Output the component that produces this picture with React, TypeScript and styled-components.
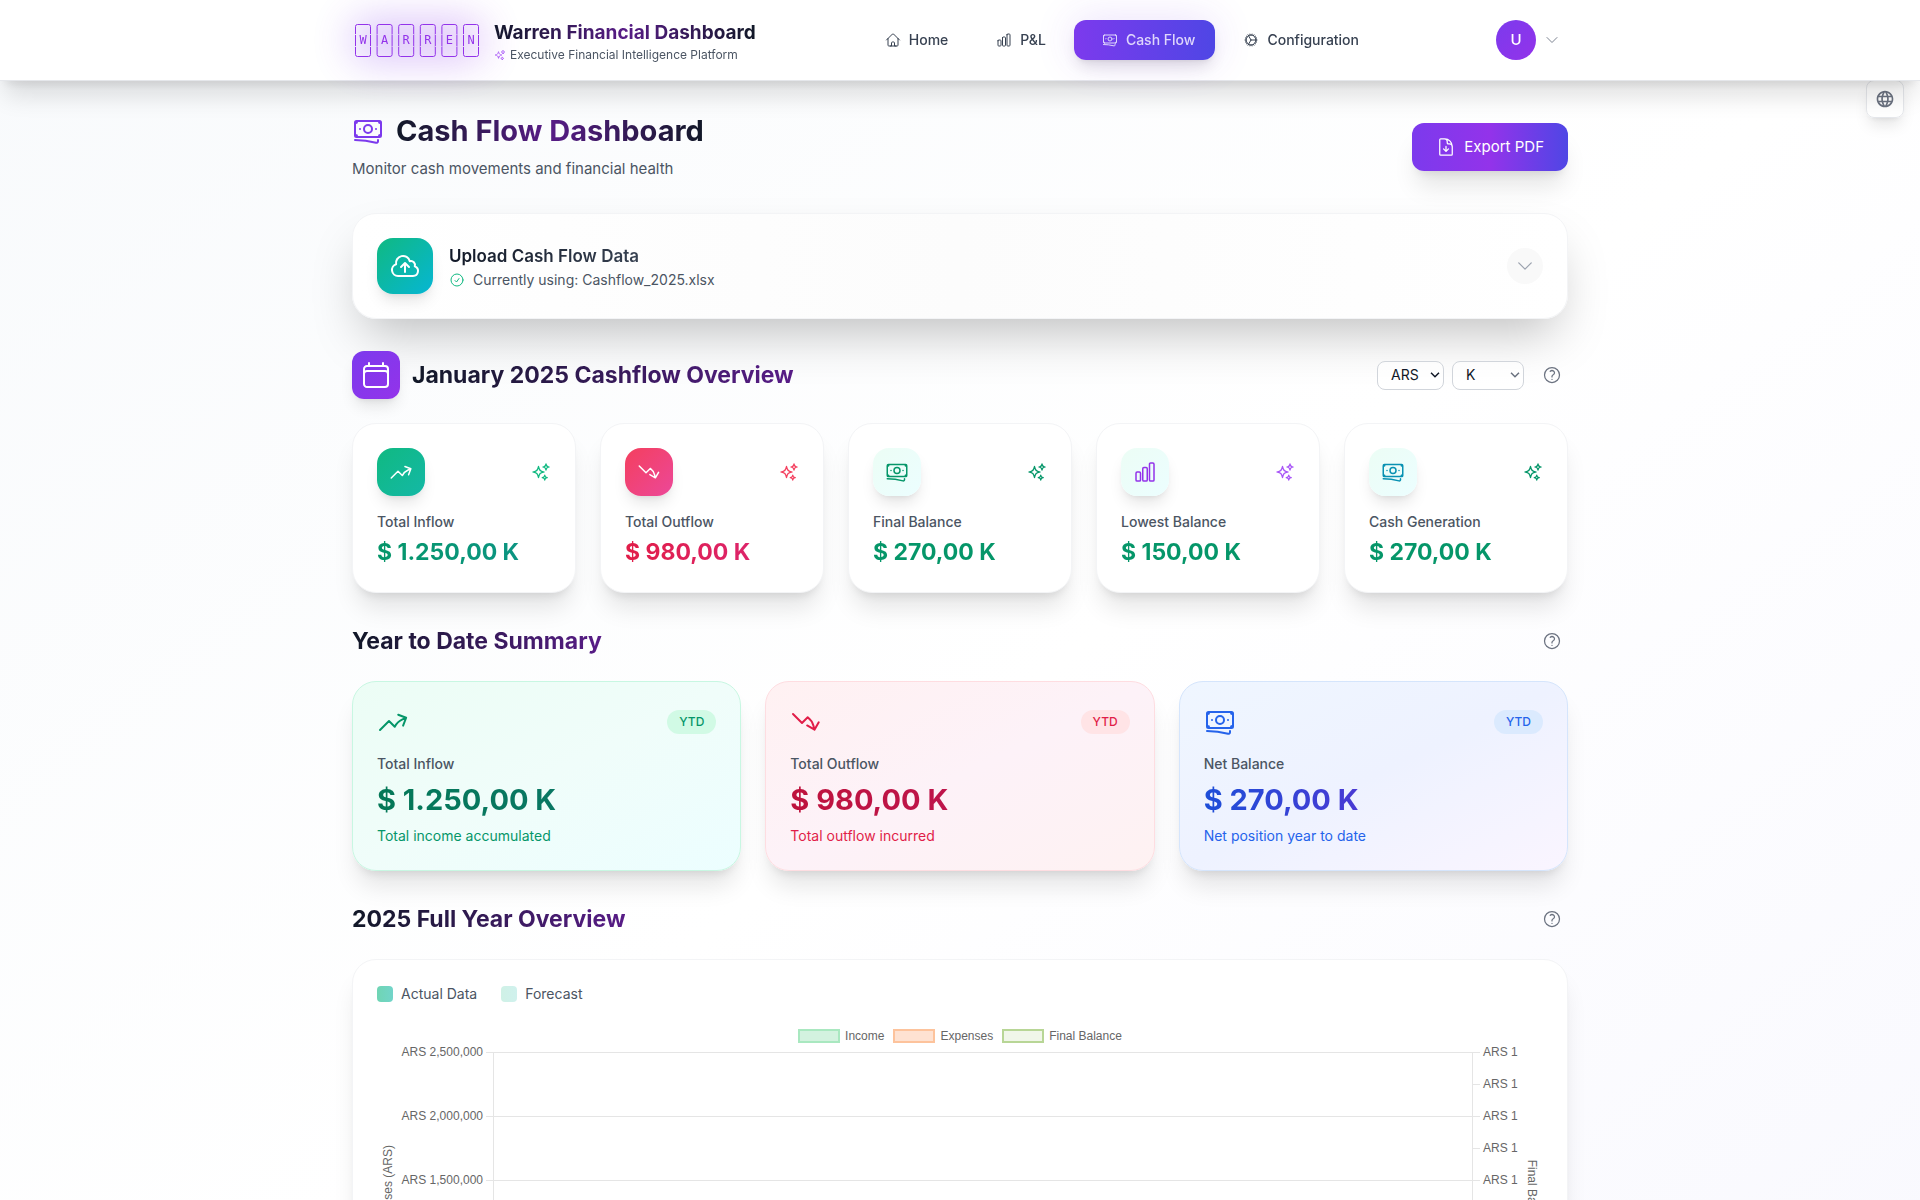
import React from "react";
import styled, { createGlobalStyle } from "styled-components";
import {
  HiOutlineArrowTrendingDown,
  HiOutlineArrowTrendingUp,
  HiOutlineBanknotes,
  HiOutlineCalendar,
  HiOutlineChartBar,
  HiOutlineCheckCircle,
  HiOutlineChevronDown,
  HiOutlineCloudArrowUp,
  HiOutlineCog,
  HiOutlineDocumentArrowDown,
  HiOutlineHome,
  HiOutlineQuestionMarkCircle,
  HiOutlineSparkles,
} from "react-icons/hi2";
import { MdLanguage } from "react-icons/md";

const GlobalStyle = createGlobalStyle`
  *, *::before, *::after { box-sizing: border-box; }
  body {
    margin: 0;
    font-family: Inter, "Liberation Sans", sans-serif;
    font-size: 15px;
    line-height: 24px;
    color: #111827;
  }
  h1, h2, h3, p { margin: 0; }
  button, select { font-family: inherit; }
  svg { display: block; flex-shrink: 0; }
`;

const Page = styled.div`
  min-height: 100vh;
  background: linear-gradient(to bottom right, #f8fafc, #ffffff 50%, #f8f8fe);
`;

const Container = styled.div`
  max-width: 1280px;
  margin: 0 auto;
  padding: 0 32px;
`;

const TopBar = styled.header`
  position: sticky;
  top: 0;
  z-index: 20;
  background: #ffffff;
  border-bottom: 1px solid #e5e7eb;
  box-shadow: 0 20px 25px -5px rgba(0, 0, 0, 0.12), 0 8px 10px -6px rgba(0, 0, 0, 0.1);
`;

const TopBarRow = styled(Container)`
  display: flex;
  align-items: center;
  justify-content: space-between;
  min-height: 80px;
`;

const Brand = styled.a`
  display: flex;
  align-items: center;
  gap: 12px;
  color: inherit;
  text-decoration: none;
`;

const LogoFrame = styled.span`
  position: relative;
  display: block;

  &::before {
    content: "";
    position: absolute;
    inset: 0;
    border-radius: 12px;
    background: linear-gradient(to right, #7c3aed, #9333ea);
    filter: blur(20px);
    opacity: 0.3;
  }

  svg { position: relative; }
`;

const BrandText = styled.span`
  display: flex;
  flex-direction: column;
  padding-top: 2px;
`;

const gradientText = `
  background-clip: text;
  -webkit-background-clip: text;
  color: transparent;
`;

const BrandName = styled.span`
  font-size: 19px;
  line-height: 28px;
  font-weight: 700;
  background-image: linear-gradient(to right, #111827, #581c87, #111827);
  ${gradientText}
`;

const BrandTag = styled.span`
  display: flex;
  align-items: center;
  gap: 4px;
  font-size: 12px;
  line-height: 16px;
  color: #4b5563;

  svg { color: #a855f7; }
`;

const Nav = styled.nav`
  display: flex;
  align-items: center;
  gap: 8px;
`;

const NavLink = styled.a<{ $active?: boolean }>`
  display: flex;
  align-items: center;
  gap: 8px;
  padding: 10px 20px 10px ${(p) => (p.$active ? 28 : 20)}px;
  border-radius: 12px;
  font-size: 14px;
  line-height: 20px;
  font-weight: 500;
  text-decoration: none;
  color: ${(p) => (p.$active ? "#ded6fb" : "#374151")};
  background: ${(p) => (p.$active ? "linear-gradient(to right, #7c3aed, #4f46e5)" : "none")};
  box-shadow: ${(p) =>
    p.$active
      ? "0 10px 15px -3px rgba(0,0,0,.1), 0 4px 6px -4px rgba(0,0,0,.1), 0 0 40px rgba(124,58,237,.16)"
      : "none"};
`;

const UserButton = styled.button`
  display: flex;
  align-items: center;
  gap: 8px;
  padding: 8px;
  border: 0;
  background: none;
  color: #7b8290;
`;

const Avatar = styled.span`
  display: grid;
  place-items: center;
  width: 40px;
  height: 40px;
  border-radius: 50%;
  background: linear-gradient(to bottom right, #7c3aed, #9333ea);
  color: #ffffff;
  font-size: 15px;
  line-height: 24px;
  font-weight: 500;
`;

const LanguageButton = styled.button`
  position: fixed;
  top: 80px;
  right: 16px;
  z-index: 10;
  display: grid;
  place-items: center;
  width: 38px;
  height: 38px;
  padding: 0;
  border: 1px solid #e5e7eb;
  border-radius: 8px;
  background: rgba(255, 255, 255, 0.9);
  color: #6b7280;
  box-shadow: 0 10px 15px -3px rgba(0, 0, 0, 0.1), 0 4px 6px -4px rgba(0, 0, 0, 0.1);
`;

const Main = styled.main`
  display: flex;
  flex-direction: column;
  gap: 32px;
  padding-top: 32px;
  padding-bottom: 32px;
`;

const PageHead = styled.div`
  display: flex;
  align-items: center;
  justify-content: space-between;
`;

const TitleRow = styled.div`
  display: flex;
  align-items: center;
  gap: 12px;

  svg { color: #7c3aed; }
`;

const PageTitle = styled.h1`
  font-size: 29px;
  line-height: 36px;
  font-weight: 700;
  background-image: linear-gradient(to right, #111827, #581c87, #111827);
  ${gradientText}
`;

const PageSubtitle = styled.p`
  margin-top: 8px;
  color: #4b5563;
`;

const ExportButton = styled.button`
  display: flex;
  align-items: center;
  gap: 8px;
  padding: 12px 24px;
  border: 0;
  border-radius: 12px;
  background: linear-gradient(to right, #7c3aed, #9333ea, #4f46e5);
  color: #ffffff;
  font-size: 15px;
  line-height: 24px;
  font-weight: 400;
  box-shadow: 0 20px 25px -5px rgba(0, 0, 0, 0.1), 0 8px 10px -6px rgba(0, 0, 0, 0.1);
`;

const cardShadow = "0 20px 25px -5px rgba(0,0,0,.1), 0 8px 10px -6px rgba(0,0,0,.1)";

const Card = styled.div`
  padding: 24px;
  border: 1px solid #f3f4f6;
  border-radius: 24px;
  background: #ffffff;
  box-shadow: ${cardShadow};
`;

const UploadCard = styled(Card)`
  display: flex;
  align-items: center;
  gap: 16px;
  background: linear-gradient(to right, #ffffff, #fcfcfc 50%, #ffffff);
  box-shadow: 0 25px 50px -12px rgba(0, 0, 0, 0.25);
`;

const IconTile = styled.span<{ $size: number; $radius: number; $fill: string; $color?: string }>`
  display: grid;
  place-items: center;
  flex-shrink: 0;
  width: ${(p) => p.$size}px;
  height: ${(p) => p.$size}px;
  border-radius: ${(p) => p.$radius}px;
  background: linear-gradient(to bottom right, ${(p) => p.$fill});
  color: ${(p) => p.$color ?? "#ffffff"};
  box-shadow: 0 10px 15px -3px rgba(0, 0, 0, 0.1), 0 4px 6px -4px rgba(0, 0, 0, 0.1);
`;

const UploadText = styled.div`
  flex: 1;
`;

const UploadTitle = styled.h3`
  width: fit-content;
  font-size: 17px;
  line-height: 28px;
  font-weight: 600;
  background-image: linear-gradient(to right, #111827, #374151);
  ${gradientText}
`;

const UploadStatus = styled.p`
  display: flex;
  align-items: center;
  gap: 8px;
  font-size: 14px;
  line-height: 20px;
  color: #4b5563;

  svg { color: #10b981; }
`;

const ExpandButton = styled.button`
  display: grid;
  place-items: center;
  padding: 8px;
  border: 0;
  border-radius: 50%;
  background: #f9f9f9;
  color: #9ca3af;
`;

const Section = styled.section`
  display: flex;
  flex-direction: column;
  gap: 24px;
`;

const SectionHead = styled.div`
  display: flex;
  align-items: center;
  justify-content: space-between;
`;

const SectionTitle = styled.h2`
  font-size: 23px;
  line-height: 32px;
  font-weight: 700;
  background-image: linear-gradient(to right, #111827, #581c87);
  ${gradientText}
`;

const Controls = styled.div`
  display: flex;
  align-items: center;
  gap: 12px;
`;

const SelectGroup = styled.div`
  display: flex;
  gap: 8px;
`;

const Select = styled.select<{ $width: number; $arrow: string }>`
  appearance: none;
  width: ${(p) => p.$width}px;
  height: 29px;
  padding: 0 12px 0 13px;
  border: 1px solid #d1d5db;
  border-radius: 8px;
  background-color: rgba(255, 255, 255, 0.5);
  background-image: url("data:image/svg+xml,%3Csvg xmlns='http://www.w3.org/2000/svg' width='10' height='6' fill='none' stroke='%23${(p) => p.$arrow}' stroke-width='1.5'%3E%3Cpath d='M1 .8l4 4 4-4'/%3E%3C/svg%3E");
  background-repeat: no-repeat;
  background-position: right 3px center;
  color: #111827;
  font-size: 14px;
  line-height: 20px;
`;

const HelpButton = styled.button`
  display: grid;
  place-items: center;
  padding: 6px;
  border: 0;
  background: none;
  color: #6b7280;
`;

const Grid = styled.div<{ $columns: number }>`
  display: grid;
  grid-template-columns: repeat(${(p) => p.$columns}, minmax(0, 1fr));
  gap: 24px;
`;

const CardTop = styled.div`
  display: flex;
  align-items: center;
  justify-content: space-between;
  margin-bottom: 16px;
`;

const Label = styled.p`
  font-size: 14px;
  line-height: 20px;
  font-weight: 500;
  color: #4b5563;
`;

const KpiValue = styled.p<{ $ink: string }>`
  margin-top: 4px;
  font-size: 23px;
  line-height: 32px;
  font-weight: 700;
  background-image: linear-gradient(to right, ${(p) => p.$ink});
  ${gradientText}
`;

const YtdCard = styled(Card)<{ $fill: string; $edge: string }>`
  border-color: ${(p) => p.$edge};
  background: linear-gradient(to bottom right, ${(p) => p.$fill});
`;

const YtdValue = styled.p<{ $ink: string }>`
  margin: 8px 0;
  font-size: 29px;
  line-height: 36px;
  font-weight: 700;
  background-image: linear-gradient(to right, ${(p) => p.$ink});
  ${gradientText}
`;

const YtdNote = styled.p<{ $color: string }>`
  font-size: 14px;
  line-height: 20px;
  color: ${(p) => p.$color};
`;

const Badge = styled.span<{ $bg: string; $color: string }>`
  padding: 4px 12px;
  border-radius: 12px;
  background: ${(p) => p.$bg};
  color: ${(p) => p.$color};
  font-size: 12px;
  line-height: 16px;
  font-weight: 500;
`;

const DataLegend = styled.div`
  display: flex;
  gap: 24px;
  margin-bottom: 16px;
`;

const DataLegendItem = styled.span<{ $opacity: number }>`
  display: flex;
  align-items: center;
  gap: 8px;
  font-size: 14px;
  line-height: 20px;
  color: #4b5563;

  &::before {
    content: "";
    width: 16px;
    height: 16px;
    border-radius: 4px;
    background: linear-gradient(to right, #10b981, #14b8a6);
    opacity: ${(p) => p.$opacity};
  }
`;

const ChartBox = styled.div`
  position: relative;
  height: 400px;
  font-family: "Liberation Sans", sans-serif;
  font-size: 12px;
  line-height: 14px;
  color: #666666;
`;

const ChartSvg = styled.svg`
  width: 100%;
  height: 100%;
  overflow: visible;

  text { fill: #666666; }
`;

const SeriesLegend = styled.div`
  position: absolute;
  inset: 9px 0 auto;
  display: flex;
  justify-content: center;
  gap: 9px;
`;

const SeriesKey = styled.span<{ $fill: string; $stroke: string }>`
  display: flex;
  align-items: center;
  gap: 5px;

  &::before {
    content: "";
    width: 42px;
    height: 14px;
    border: 2px solid ${(p) => p.$stroke};
    background: ${(p) => p.$fill};
  }
`;

const LETTERS = ["W", "A", "R", "R", "E", "N"];

function WarrenLogo() {
  return (
    <svg width="130" height="40" viewBox="0 0 130 40" fill="none" role="img" aria-label="Warren">
      {LETTERS.map((letter, i) => {
        const x = 3.5 + i * 21.6;
        return (
          <g key={i}>
            <rect x={x} y="4.5" width="15" height="32" rx="2" stroke="#9333ea" />
            <path d={`M${x} 14v1M${x} 26v1M${x + 15} 14v1M${x + 15} 26v1`} stroke="#e3d0fb" />
            <text
              x={x + 7.5}
              y="24"
              textAnchor="middle"
              fontFamily="'DejaVu Sans Mono', monospace"
              fontSize="12"
              fill="#9333ea"
            >
              {letter}
            </text>
          </g>
        );
      })}
    </svg>
  );
}

const NAV = [
  { label: "Home", icon: HiOutlineHome },
  { label: "P&L", icon: HiOutlineChartBar },
  { label: "Cash Flow", icon: HiOutlineBanknotes, active: true },
  { label: "Configuration", icon: HiOutlineCog },
];

const KPIS = [
  { label: "Total Inflow", value: "$ 1.250,00 K", icon: HiOutlineArrowTrendingUp, fill: "#10b981, #14b8a6", color: "#ffffff", spark: "#10b981", ink: "#059669, #0d9488" },
  { label: "Total Outflow", value: "$ 980,00 K", icon: HiOutlineArrowTrendingDown, fill: "#f43f5e, #ec4899", color: "#ffffff", spark: "#f43f5e", ink: "#e11d48, #db2777" },
  { label: "Final Balance", value: "$ 270,00 K", icon: HiOutlineBanknotes, fill: "#ecfdf5, #ecfeff", color: "#059669", spark: "#059669", ink: "#059669, #059669" },
  { label: "Lowest Balance", value: "$ 150,00 K", icon: HiOutlineChartBar, fill: "#ecfdf5, #ecfeff", color: "#9333ea", spark: "#a855f7", ink: "#059669, #059669" },
  { label: "Cash Generation", value: "$ 270,00 K", icon: HiOutlineBanknotes, fill: "#ecfdf5, #ecfeff", color: "#0891b2", spark: "#059669", ink: "#059669, #059669" },
];

const YTD = [
  { label: "Total Inflow", value: "$ 1.250,00 K", note: "Total income accumulated", icon: HiOutlineArrowTrendingUp, fill: "#ecfdf5, #f0fdfa, #ecfeff", edge: "#c8f7e2", badge: "#d1fae5", color: "#059669", ink: "#047857, #0f766e" },
  { label: "Total Outflow", value: "$ 980,00 K", note: "Total outflow incurred", icon: HiOutlineArrowTrendingDown, fill: "#fff1f2, #fdf2f8, #fef2f2", edge: "#fedde1", badge: "#ffe4e6", color: "#e11d48", ink: "#be123c, #be185d" },
  { label: "Net Balance", value: "$ 270,00 K", note: "Net position year to date", icon: HiOutlineBanknotes, fill: "#eff6ff, #eef2ff, #faf5ff", edge: "#d5e5fc", badge: "#dbeafe", color: "#2563eb", ink: "#1d4ed8, #7e22ce" },
];

const LEFT_TICKS = ["ARS 2,500,000", "ARS 2,000,000", "ARS 1,500,000", "ARS 1,000,000", "ARS 500,000", "ARS 0"];
const PLOT_TOP = 32;
const PLOT_LEFT = 116;
const ROW = 64;

function YearChart() {
  return (
    <ChartBox>
      <SeriesLegend>
        <SeriesKey $fill="#d3f2df" $stroke="#a9e8c0">Income</SeriesKey>
        <SeriesKey $fill="#fee2d2" $stroke="#fdc39c">Expenses</SeriesKey>
        <SeriesKey $fill="#f0f6e9" $stroke="#b8d696">Final Balance</SeriesKey>
      </SeriesLegend>
      <ChartSvg>
        <defs>
          <mask id="plot-mask" maskUnits="userSpaceOnUse" x="0" y="0" width="100%" height="100%">
            <rect width="100%" height="100%" fill="#ffffff" />
            <svg x="100%" y="0" width="1" height="100%" overflow="visible">
              <rect x="-63" width="200" height="500" fill="#000000" />
            </svg>
          </mask>
        </defs>
        {LEFT_TICKS.map((tick, i) => {
          const y = PLOT_TOP + i * ROW;
          return (
            <g key={tick}>
              <rect x={PLOT_LEFT - 7} y={y} width="100%" height="1" fill="#e5e5e5" mask="url(#plot-mask)" />
              <text x={PLOT_LEFT - 10} y={y + 4} textAnchor="end">{tick}</text>
            </g>
          );
        })}
        <rect x={PLOT_LEFT} y={PLOT_TOP} width="1" height={ROW * 5} fill="#e5e5e5" />
        <text transform="translate(15 194) rotate(-90)" textAnchor="middle">Income / Expenses (ARS)</text>
        <svg x="100%" y="0" width="1" height="100%" overflow="visible">
          <rect x="-71" y={PLOT_TOP} width="1" height={ROW * 5} fill="#e5e5e5" />
          {Array.from({ length: 11 }, (_, i) => {
            const y = PLOT_TOP + (i * ROW) / 2;
            return (
              <g key={i}>
                <rect x="-70" y={y} width="7" height="1" fill="#e5e5e5" />
                <text x="-60" y={y + 4}>ARS 1</text>
              </g>
            );
          })}
          <text transform="translate(-15 194) rotate(90)" textAnchor="middle">Final Balance (ARS)</text>
        </svg>
      </ChartSvg>
    </ChartBox>
  );
}

function Help({ topic }: { topic: string }) {
  return (
    <HelpButton aria-label={`Help: ${topic}`}>
      <HiOutlineQuestionMarkCircle size={20} />
    </HelpButton>
  );
}

export default function App() {
  return (
    <Page>
      <GlobalStyle />
      <TopBar>
        <TopBarRow>
          <Brand href="#">
            <LogoFrame>
              <WarrenLogo />
            </LogoFrame>
            <BrandText>
              <BrandName>Warren Financial Dashboard</BrandName>
              <BrandTag>
                <HiOutlineSparkles size={12} />
                Executive Financial Intelligence Platform
              </BrandTag>
            </BrandText>
          </Brand>
          <Nav>
            {NAV.map(({ label, icon: Icon, active }) => (
              <NavLink key={label} href="#" $active={active}>
                <Icon size={16} />
                {label}
              </NavLink>
            ))}
          </Nav>
          <UserButton aria-label="User menu">
            <Avatar>U</Avatar>
            <HiOutlineChevronDown size={16} />
          </UserButton>
        </TopBarRow>
      </TopBar>
      <LanguageButton aria-label="Language">
        <MdLanguage size={20} />
      </LanguageButton>

      <Container>
        <Main>
          <PageHead>
            <div>
              <TitleRow>
                <HiOutlineBanknotes size={32} />
                <PageTitle>Cash Flow Dashboard</PageTitle>
              </TitleRow>
              <PageSubtitle>Monitor cash movements and financial health</PageSubtitle>
            </div>
            <ExportButton>
              <HiOutlineDocumentArrowDown size={20} />
              Export PDF
            </ExportButton>
          </PageHead>

          <UploadCard>
            <IconTile $size={56} $radius={16} $fill="#10b981, #06b6d4">
              <HiOutlineCloudArrowUp size={32} />
            </IconTile>
            <UploadText>
              <UploadTitle>Upload Cash Flow Data</UploadTitle>
              <UploadStatus>
                <HiOutlineCheckCircle size={16} />
                Currently using: Cashflow_2025.xlsx
              </UploadStatus>
            </UploadText>
            <ExpandButton aria-label="Show upload options">
              <HiOutlineChevronDown size={20} />
            </ExpandButton>
          </UploadCard>

          <Section>
            <SectionHead>
              <TitleRow>
                <IconTile $size={48} $radius={12} $fill="#7c3aed, #9333ea">
                  <HiOutlineCalendar size={32} color="#ffffff" />
                </IconTile>
                <SectionTitle>January 2025 Cashflow Overview</SectionTitle>
              </TitleRow>
              <Controls>
                <SelectGroup>
                  <Select $width={67} $arrow="111827" aria-label="Currency" defaultValue="ARS">
                    <option>ARS</option>
                    <option>USD</option>
                  </Select>
                  <Select $width={72} $arrow="6b7280" aria-label="Unit" defaultValue="K">
                    <option>K</option>
                    <option>M</option>
                  </Select>
                </SelectGroup>
                <Help topic="monthly overview" />
              </Controls>
            </SectionHead>
            <Grid $columns={5}>
              {KPIS.map(({ label, value, icon: Icon, fill, color, spark, ink }) => (
                <Card key={label}>
                  <CardTop>
                    <IconTile $size={48} $radius={16} $fill={fill} $color={color}>
                      <Icon size={24} />
                    </IconTile>
                    <HiOutlineSparkles size={20} color={spark} />
                  </CardTop>
                  <Label>{label}</Label>
                  <KpiValue $ink={ink}>{value}</KpiValue>
                </Card>
              ))}
            </Grid>
          </Section>

          <Section>
            <SectionHead>
              <SectionTitle>Year to Date Summary</SectionTitle>
              <Help topic="year to date" />
            </SectionHead>
            <Grid $columns={3}>
              {YTD.map(({ label, value, note, icon: Icon, fill, edge, badge, color, ink }) => (
                <YtdCard key={label} $fill={fill} $edge={edge}>
                  <CardTop>
                    <Icon size={32} color={color} />
                    <Badge $bg={badge} $color={color}>YTD</Badge>
                  </CardTop>
                  <Label>{label}</Label>
                  <YtdValue $ink={ink}>{value}</YtdValue>
                  <YtdNote $color={color}>{note}</YtdNote>
                </YtdCard>
              ))}
            </Grid>
          </Section>

          <Section>
            <SectionHead>
              <SectionTitle>2025 Full Year Overview</SectionTitle>
              <Help topic="full year" />
            </SectionHead>
            <Card>
              <DataLegend>
                <DataLegendItem $opacity={0.6}>Actual Data</DataLegendItem>
                <DataLegendItem $opacity={0.2}>Forecast</DataLegendItem>
              </DataLegend>
              <YearChart />
            </Card>
          </Section>
        </Main>
      </Container>
    </Page>
  );
}
